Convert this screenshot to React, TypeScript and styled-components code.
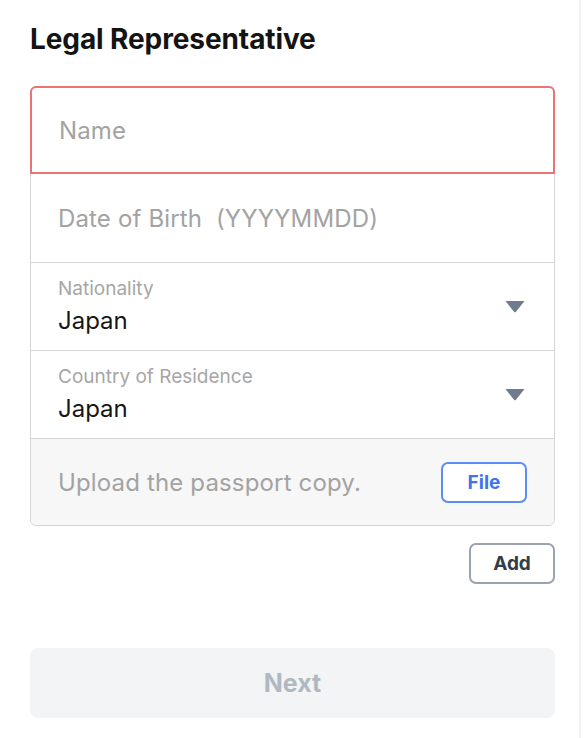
import React from "react";
import styled, { createGlobalStyle } from "styled-components";

const Global = createGlobalStyle`
  html, body { margin: 0; padding: 0; background: #ffffff; }
  body { font-family: Inter, "Noto Sans", "Liberation Sans", sans-serif; -webkit-font-smoothing: antialiased; }
  * { box-sizing: border-box; }
`;

const Page = styled.div`
  width: 583px;
  height: 738px;
  padding: 0 2px 0 0;
  display: flex;
`;

const Sheet = styled.main`
  flex: 1;
  border-right: 2px solid #f0f0f0;
  padding: 22px 24px 0 30px;
  display: flex;
  flex-direction: column;
`;

const Title = styled.h1`
  margin: 0;
  font-size: 28px;
  line-height: 34px;
  font-weight: 700;
  color: #141414;
  letter-spacing: -0.1px;
`;

const Card = styled.div`
  margin-top: 30px;
  border: 1px solid #d6d6d6;
  border-radius: 6px;
  display: flex;
  flex-direction: column;
`;

const Row = styled.div<{ $error?: boolean; $muted?: boolean; $last?: boolean; $flush?: boolean }>`
  height: ${(p) => (p.$last ? "87px" : "88px")};
  display: flex;
  align-items: center;
  justify-content: space-between;
  padding: 0 27px 0 27px;
  border-top: ${(p) => (p.$flush ? "none" : "1px solid #d6d6d6")};
  background: ${(p) => (p.$muted ? "#f7f7f7" : "#ffffff")};
  ${(p) => (p.$last ? "border-radius: 0 0 6px 6px;" : "")}
  ${(p) =>
    p.$error
      ? `
    border: 2px solid #ea7373;
    border-radius: 6px 6px 0 0;
    margin: -1px -1px 0 -1px;
    height: 88px;
  `
      : ""}
`;

const Placeholder = styled.span`
  font-size: 24px;
  color: #a3a3a3;
  letter-spacing: 0.15px;
`;

const Stack = styled.div`
  display: flex;
  flex-direction: column;
  gap: 7px;
`;

const Label = styled.span`
  font-size: 19px;
  color: #a6a6a6;
  line-height: 22px;
`;

const Value = styled.span`
  font-size: 24px;
  color: #171717;
  line-height: 28px;
`;

const Caret = styled.svg`
  width: 20px;
  height: 13px;
  margin-right: 2px;
`;

const FileButton = styled.button`
  width: 86px;
  height: 41px;
  border: 2px solid #5c8cf5;
  border-radius: 7px;
  background: #ffffff;
  color: #3f73f0;
  font-family: inherit;
  font-size: 19px;
  font-weight: 700;
  padding: 0;
`;

const Actions = styled.div`
  display: flex;
  justify-content: flex-end;
  margin-top: 17px;
`;

const AddButton = styled.button`
  width: 86px;
  height: 41px;
  border: 2px solid #9aa3af;
  border-radius: 7px;
  background: #ffffff;
  color: #333c48;
  font-family: inherit;
  font-size: 19px;
  font-weight: 700;
  padding: 0;
`;

const NextButton = styled.button`
  margin-top: 64px;
  height: 70px;
  width: 100%;
  border: none;
  border-radius: 8px;
  background: #f2f4f6;
  color: #b1b8c0;
  font-family: inherit;
  font-size: 25px;
  font-weight: 700;
`;

const DownCaret = () => (
  <Caret viewBox="0 0 20 13">
    <path d="M0.5 1 H19.5 L10.8 11.9 Q10 12.8 9.2 11.9 Z" fill="#6f7c8e" />
  </Caret>
);

export default function App() {
  return (
    <Page>
      <Global />
      <Sheet>
        <Title>Legal Representative</Title>
        <Card>
          <Row $error>
            <Placeholder>Name</Placeholder>
          </Row>
          <Row $flush>
            <Placeholder>Date of Birth&nbsp;&nbsp;(YYYYMMDD)</Placeholder>
          </Row>
          <Row>
            <Stack>
              <Label>Nationality</Label>
              <Value>Japan</Value>
            </Stack>
            <DownCaret />
          </Row>
          <Row>
            <Stack>
              <Label>Country of Residence</Label>
              <Value>Japan</Value>
            </Stack>
            <DownCaret />
          </Row>
          <Row $muted $last>
            <Placeholder>Upload the passport copy.</Placeholder>
            <FileButton>File</FileButton>
          </Row>
        </Card>
        <Actions>
          <AddButton>Add</AddButton>
        </Actions>
        <NextButton>Next</NextButton>
      </Sheet>
    </Page>
  );
}
